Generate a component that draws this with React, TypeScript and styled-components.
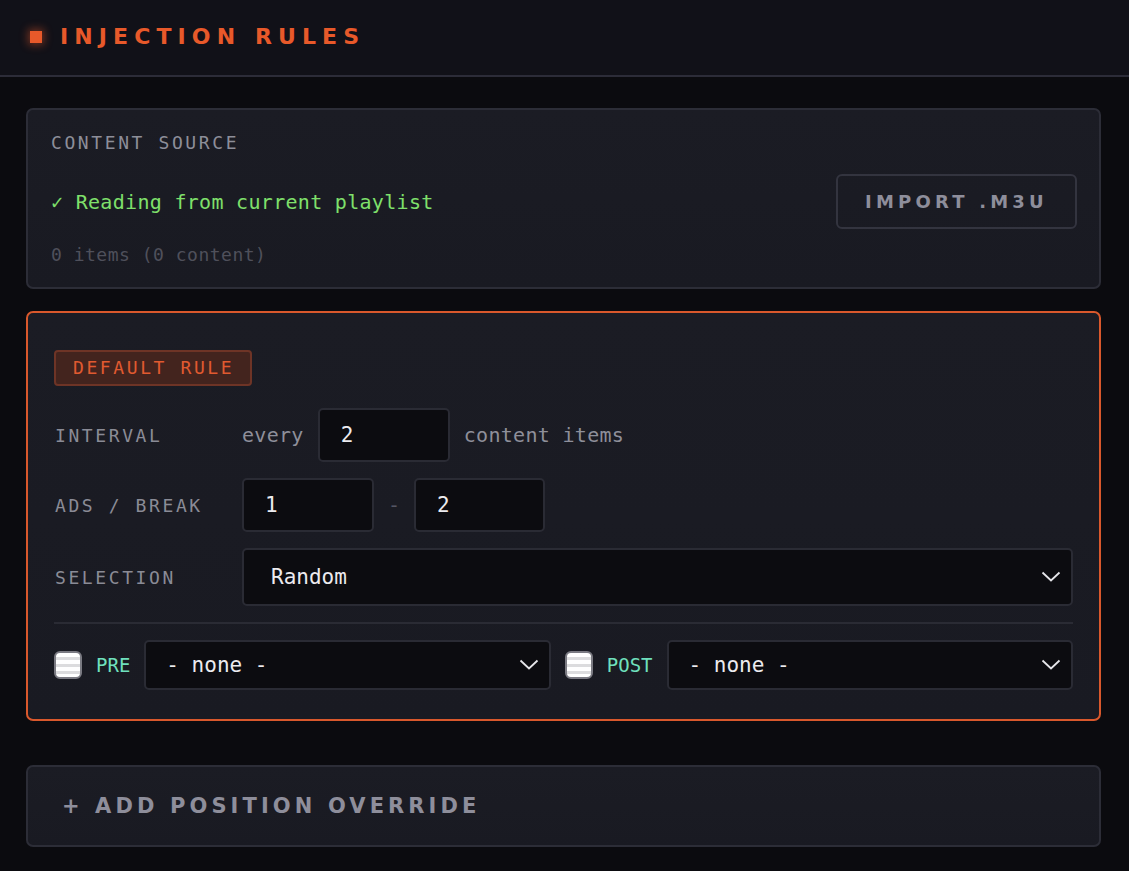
import React from "react";
import styled, { createGlobalStyle } from "styled-components";

const Global = createGlobalStyle`
  html, body { margin: 0; padding: 0; background: #0b0b0f; }
  body { font-family: "DejaVu Sans Mono", "Liberation Mono", monospace; color: #d8d8e0; }
  * { box-sizing: border-box; }
`;

const MONO = `"DejaVu Sans Mono", "Liberation Mono", monospace`;
const DISPLAY = `"DejaVu Sans", "Liberation Sans", sans-serif`;

const Page = styled.div`
  min-height: 871px;
  background: #0b0b0f;
`;

const Header = styled.header`
  height: 77px;
  display: flex;
  align-items: center;
  gap: 18px;
  padding: 0 30px 2px;
  background: #111118;
  border-bottom: 2px solid #2c2c38;
`;

const Led = styled.span`
  width: 12px;
  height: 12px;
  background: #e8592a;
  box-shadow: 0 0 8px 2px rgba(232, 89, 42, 0.45);
`;

const Title = styled.h1`
  margin: 0;
  font-family: ${DISPLAY};
  font-weight: 700;
  font-size: 22px;
  letter-spacing: 6.1px;
  color: #e8592a;
`;

const Body = styled.main`
  display: flex;
  flex-direction: column;
  padding: 31px 28px 24px 26px;
`;

const Card = styled.section<{ $accent?: boolean }>`
  background: linear-gradient(180deg, #1b1c24 0%, #191a22 100%);
  border: ${(p) => (p.$accent ? "2px solid #d9582c" : "2px solid #2c2d37")};
  border-radius: 7px;
`;

const SourceCard = styled(Card)`
  padding: 22px 22px 22px 23px;
  display: flex;
  flex-direction: column;
`;

const Label = styled.div`
  font-family: ${MONO};
  font-size: 18px;
  letter-spacing: 2.6px;
  color: #8d8e99;
`;

const SourceRow = styled.div`
  display: flex;
  align-items: center;
  justify-content: space-between;
  margin-top: 21px;
`;

const Ok = styled.div`
  font-family: ${MONO};
  font-size: 20px;
  letter-spacing: 0.3px;
  color: #7fe06b;
`;

const Muted = styled.div`
  font-family: ${MONO};
  font-size: 18px;
  letter-spacing: 0.5px;
  color: #4f505b;
  margin-top: 15px;
`;

const GhostButton = styled.button`
  width: 241px;
  height: 55px;
  background: transparent;
  border: 2px solid #33343f;
  border-radius: 6px;
  font-family: ${DISPLAY};
  font-weight: 700;
  font-size: 18px;
  letter-spacing: 4.2px;
  color: #8e8e9b;
  cursor: pointer;
`;

const RuleCard = styled(Card)`
  margin-top: 22px;
  padding: 37px 26px 29px 26px;
  display: flex;
  flex-direction: column;
`;

const Badge = styled.div`
  align-self: flex-start;
  padding: 5px 16px 6px 17px;
  background: #43241e;
  border: 2px solid #6e3426;
  border-radius: 4px;
  font-family: ${MONO};
  font-size: 18px;
  letter-spacing: 2.6px;
  color: #e05a30;
`;

const Form = styled.div`
  display: grid;
  grid-template-columns: 188px 1fr;
  row-gap: 16px;
  align-items: center;
  margin-top: 22px;
`;

const FieldLabel = styled(Label)`
  padding-left: 1px;
  color: #8a8b96;
`;

const Inline = styled.div`
  display: flex;
  align-items: center;
  gap: 14px;
`;

const Word = styled.span`
  font-family: ${MONO};
  font-size: 20px;
  letter-spacing: 0.3px;
  color: #8e8f9a;
`;

const Dash = styled.span`
  font-family: ${MONO};
  font-size: 20px;
  color: #555663;
  width: 12px;
  text-align: center;
`;

const Field = styled.div<{ $w?: number; $h?: number }>`
  width: ${(p) => (p.$w ? `${p.$w}px` : "100%")};
  height: ${(p) => p.$h ?? 54}px;
  display: flex;
  align-items: center;
  justify-content: space-between;
  padding: 0 10px 0 21px;
  background: #0c0c10;
  border: 2px solid #2a2b34;
  border-radius: 5px;
  font-family: ${MONO};
  font-size: 21px;
  color: #ecebef;
`;

const Divider = styled.hr`
  grid-column: 1 / -1;
  width: 100%;
  margin: 0;
  border: 0;
  border-top: 2px solid #2a2b34;
`;

const SlotRow = styled.div`
  grid-column: 1 / -1;
  display: flex;
  align-items: center;
  gap: 14px;
`;

const Check = styled.span`
  flex: none;
  width: 28px;
  height: 28px;
  border-radius: 6px;
  border: 2px solid #7a7a82;
  background: repeating-linear-gradient(
    180deg,
    #ffffff 0px,
    #ffffff 4px,
    #dcdcde 4px,
    #dcdcde 7px
  );
`;

const SlotName = styled.span`
  font-family: ${MONO};
  font-size: 19px;
  color: #6fe0bd;
`;

const SlotSelect = styled(Field)`
  flex: 1;
  padding: 0 10px 0 20px;
`;

const AddCard = styled(Card)`
  margin-top: 44px;
  height: 82px;
  display: flex;
  align-items: center;
  padding: 0 34px;
  font-family: ${DISPLAY};
  font-weight: 700;
  font-size: 21px;
  letter-spacing: 4.1px;
  color: #8e8e9b;
`;

const Chevron = () => (
  <svg width="20" height="12" viewBox="0 0 20 12" fill="none">
    <polyline points="1.5,1.5 10,9.5 18.5,1.5" stroke="#e6e6ea" strokeWidth="1.8" />
  </svg>
);

export default function App() {
  return (
    <Page>
      <Global />
      <Header>
        <Led />
        <Title>INJECTION RULES</Title>
      </Header>
      <Body>
        <SourceCard>
          <Label>CONTENT SOURCE</Label>
          <SourceRow>
            <Ok>✓ Reading from current playlist</Ok>
            <GhostButton>IMPORT .M3U</GhostButton>
          </SourceRow>
          <Muted>0 items (0 content)</Muted>
        </SourceCard>

        <RuleCard $accent>
          <Badge>DEFAULT RULE</Badge>
          <Form>
            <FieldLabel>INTERVAL</FieldLabel>
            <Inline>
              <Word>every</Word>
              <Field $w={132}>2</Field>
              <Word>content items</Word>
            </Inline>

            <FieldLabel>ADS / BREAK</FieldLabel>
            <Inline>
              <Field $w={132}>1</Field>
              <Dash>-</Dash>
              <Field $w={131}>2</Field>
            </Inline>

            <FieldLabel>SELECTION</FieldLabel>
            <Field $h={58} style={{ paddingLeft: 27 }}>
              Random
              <Chevron />
            </Field>

            <Divider />

            <SlotRow>
              <Check />
              <SlotName>PRE</SlotName>
              <SlotSelect $h={50}>
                - none -
                <Chevron />
              </SlotSelect>
              <Check />
              <SlotName>POST</SlotName>
              <SlotSelect $h={50}>
                - none -
                <Chevron />
              </SlotSelect>
            </SlotRow>
          </Form>
        </RuleCard>

        <AddCard>+ ADD POSITION OVERRIDE</AddCard>
      </Body>
    </Page>
  );
}
